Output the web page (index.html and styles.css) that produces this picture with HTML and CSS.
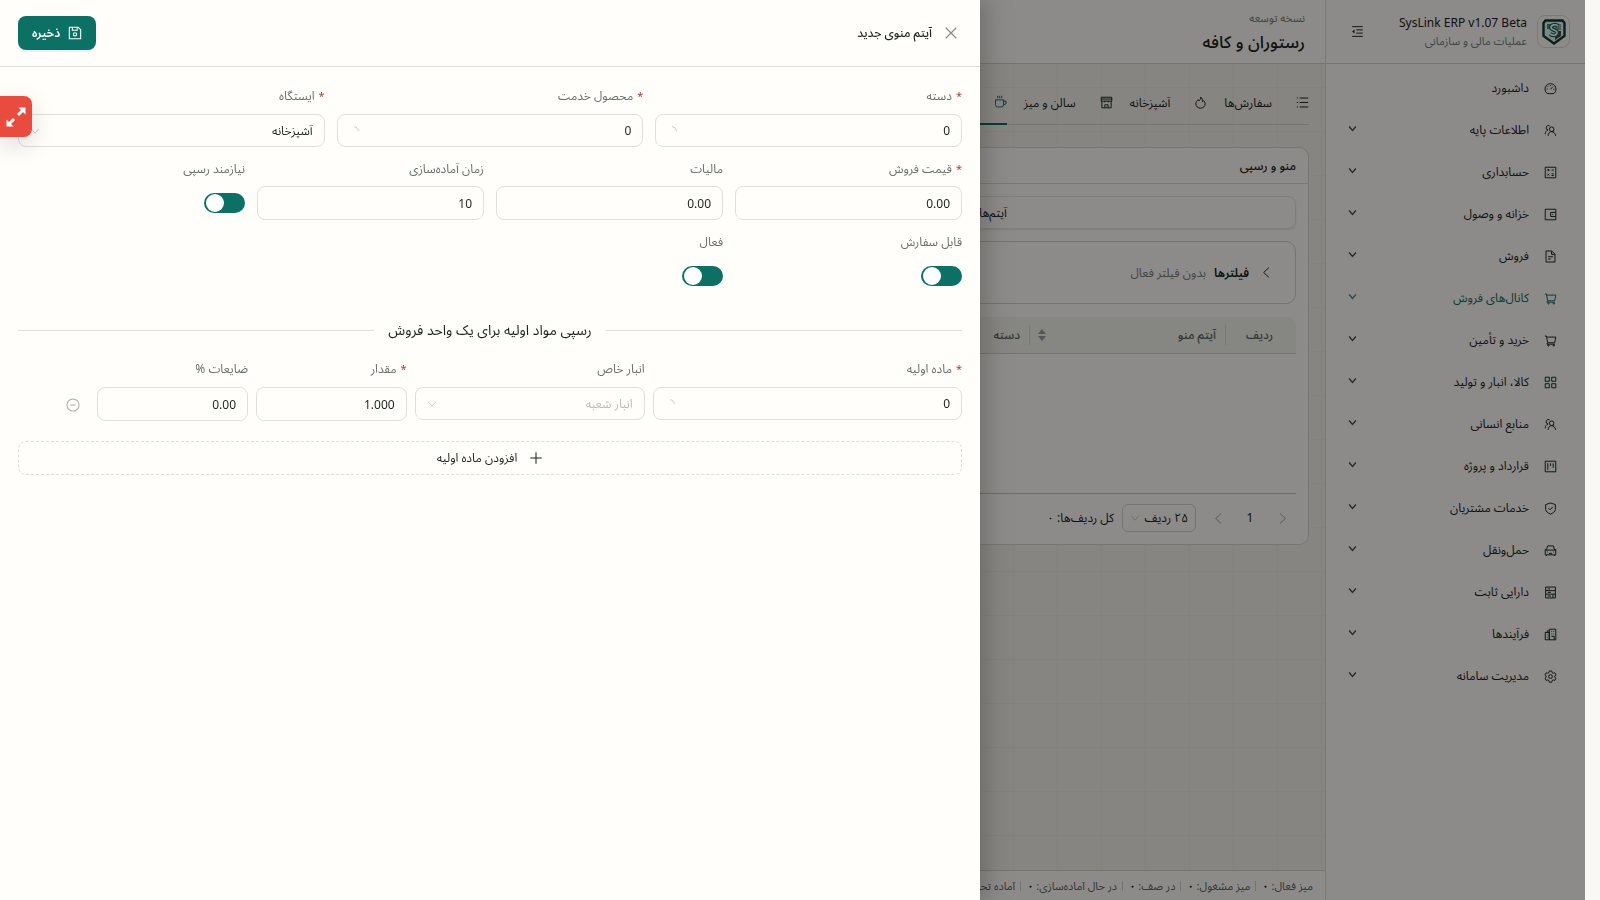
FILE: index.html
```html
<!DOCTYPE html>
<html lang="fa" dir="rtl">
  <head>
    <meta charset="UTF-8" />
    <meta name="viewport" content="width=device-width, initial-scale=1.0" />
    <title>SysLink ERP - رستوران و کافه</title>
    <link rel="stylesheet" href="styles.css">
  </head>
  <body>
    <!-- Icon sprite -->
    <svg class="sprite" aria-hidden="true">
      <symbol id="i-dashboard" viewBox="0 0 16 16"><path d="M4 14.3h8a6.8 6.8 0 0 0 2.8-5.5 6.8 6.8 0 0 0-13.6 0A6.8 6.8 0 0 0 4 14.3zM8 9l2.6-3M8 3.8v1.4M3.4 8.6h1.3M11.4 8.8h1.3M4.6 5.4l.9.9M11.2 4.8l.4.5" /></symbol>
      <symbol id="i-team" viewBox="0 0 16 16"><path d="M9.4 9.2a2.8 2.8 0 1 0 0-5.6 2.8 2.8 0 0 0 0 5.6zM5 14.6c.2-3 2-5.2 4.4-5.2s4.6 2.2 5 5.2M7 2.3a2.8 2.8 0 1 0-2 5.1C3 8 1.5 10 1.4 12.6M11 10.5l1.5-1.3" /></symbol>
      <symbol id="i-account" viewBox="0 0 16 16"><path d="M1.5 1.5h13v13h-13zM4 5h2.8M5.4 3.6v2.8M9.3 5H12M4.2 9.5l2.2 2.2M6.4 9.5l-2.2 2.2M9.3 9.6H12M9.3 11.7H12" /></symbol>
      <symbol id="i-wallet" viewBox="0 0 16 16"><path d="M14.5 5.5v-4h-13v13h13v-4M14.5 5.5H8.2v5h6.3zM10.3 8h1" /></symbol>
      <symbol id="i-file" viewBox="0 0 16 16"><path d="M9.5 1.2H2.5v13.6h11V5.2zM9.3 1.4v4h4M5 8.3h6M5 11h3.5" /></symbol>
      <symbol id="i-cart" viewBox="0 0 16 16"><path d="M1 2.5h2l1.5 8.3h8.6L14.6 3.8H3.4M4.3 10.8l-.6 1.7h9.6" /><circle cx="5.5" cy="14" r=".9" /><circle cx="12" cy="14" r=".9" /></symbol>
      <symbol id="i-grid" viewBox="0 0 16 16"><path d="M1.5 1.5h5v5h-5zM9.5 1.5h5v5h-5zM1.5 9.5h5v5h-5zM9.5 9.5h5v5h-5z" /></symbol>
      <symbol id="i-project" viewBox="0 0 16 16"><path d="M1.5 1.5h13v13h-13zM4.7 4v8M8 4v3.5M11.3 4v5.5" /></symbol>
      <symbol id="i-shield" viewBox="0 0 16 16"><path d="M8 1.2l6 2v6c0 2.6-3.4 4.6-6 5.7-2.6-1.1-6-3.1-6-5.7v-6zM5.4 7.6l2 2 3.4-3.6" /></symbol>
      <symbol id="i-car" viewBox="0 0 16 16"><path d="M1.5 7.5h13v5.800h-13zM3 7.300l1.500-5h7l1.500 5M1 6.500l1.500 1M15 6.500l-1.500 1M3 13.500v1.300M13 13.500v1.300M6 11.500h4M3.600 9.800h1M11.400 9.800h1" /></symbol>
      <symbol id="i-asset" viewBox="0 0 16 16"><path d="M2 1.300h12v13.400H2zM2 5.700h12M2 10h12M4.500 3.500h3M4.500 7.800h4M4.500 12.300h4M11 10v4.500" /></symbol>
      <symbol id="i-process" viewBox="0 0 16 16"><path d="M6.500 1.500h8v13h-8zM1.500 5.500h5v9h-5zM4 5.500v-2h2.500M9 4.200h1M11.500 4.200h1M9 7.200h1M11.500 7.200h1M9 10.200h3.500v4M3.500 8.500h1M3.500 11.500h1" /></symbol>
      <symbol id="i-gear" viewBox="0 0 16 16"><path d="M6.500 1.200h3l.5 2 1.300.8 2-.6 1.500 2.600-1.500 1.400v1.400l1.500 1.400-1.500 2.600-2-.6-1.300.8-.5 2h-3l-.5-2-1.300-.8-2 .6-1.500-2.600 1.500-1.400V7.400L1.200 6l1.500-2.600 2 .6L6 3.200z" /><circle cx="8" cy="8.100" r="2.300" /></symbol>
      <symbol id="i-outdent" viewBox="0 0 16 16"><path d="M1.500 2h13M6.500 6h8M6.500 10h8M1.500 14h13" /><path class="solid" d="M1.300 8l3-2.600v5.200z" /></symbol>
      <symbol id="i-list" viewBox="0 0 16 16"><path d="M4.500 2.500H15M4.500 8H15M4.500 13.500H15M1 2.500h1.400M1 8h1.400M1 13.500h1.400" /></symbol>
      <symbol id="i-fire" viewBox="0 0 16 16"><path d="M8.200 1.200c.3 2.500-1 3.600-2.200 5C5.600 5.700 5.300 5 5.300 4.500 3.600 5.800 2.300 7.700 2.300 9.600a5.700 5.400 0 0 0 11.400 0c0-1.500-.7-2.900-1.900-4-.3.700-.7 1.100-1.300 1.400.1-2.400-.7-4.600-2.300-5.800z" /></symbol>
      <symbol id="i-shop" viewBox="0 0 16 16"><path d="M1.500 1.500h13v4.800h-13zM2.300 6.300v8.200h11.400V6.300M1.500 3.700h13M6 14.500v-3.700h4v3.700M5.800 6.300v1.500M10.200 6.300v1.500" /></symbol>
      <symbol id="i-coffee" viewBox="0 0 16 16"><path d="M1.800 6h10v5.800a3 3 0 0 1-3 3h-4a3 3 0 0 1-3-3zM11.800 7.500h3v3.200l-3 1.500M4.500 1v3M7 1v3M9.500 1v3" /></symbol>
      <symbol id="i-right" viewBox="0 0 16 16"><path d="M5 2l6.500 6L5 14" /></symbol>
      <symbol id="i-left" viewBox="0 0 16 16"><path d="M11 2L4.500 8l6.500 6" /></symbol>
      <symbol id="i-down" viewBox="0 0 16 16"><path d="M2 4.500l6 7 6-7" /></symbol>
      <symbol id="i-close" viewBox="0 0 16 16"><path d="M2 2l12 12M14 2L2 14" /></symbol>
      <symbol id="i-save" viewBox="0 0 16 16"><path d="M1.500 1.500h10.200l2.800 2.800v10.200h-13zM5 1.500v3.300h5.500V1.500" /><circle cx="8" cy="9.500" r="1.900" /></symbol>
      <symbol id="i-plus" viewBox="0 0 16 16"><path d="M8 1.500v13M1.500 8h13" /></symbol>
      <symbol id="i-minus" viewBox="0 0 16 16"><circle cx="8" cy="8" r="6.900" /><path d="M5 8h6" /></symbol>
      <symbol id="i-spin" viewBox="0 0 16 16"><path d="M8 1.200a6.800 6.800 0 0 1 6.800 6.800" /></symbol>
      <symbol id="i-expand" viewBox="0 0 20 20"><path d="M12 8l5-5M8 12l-5 5" stroke-width="3" /><path class="solid" d="M12.500 0.500h7v7zM0.500 12.500v7h7z" /></symbol>
    </svg>

    <div class="app">
      <aside class="sidebar">
        <div class="brand">
          <span class="brand-logo">
            <svg viewBox="0 0 24 26" aria-hidden="true">
              <path d="M3.500 1.500h17l2 2.500v13L12 24.500 1.500 17V4z" fill="#e9f3ee" stroke="#0b3b35" stroke-width="2.400" />
              <path d="M5 5h7v5H5z" fill="#3d9a83" />
              <path d="M13 5h6v6h-6z" fill="#8ba7a0" />
              <path d="M13 12h6v5l-6 4z" fill="#56423f" />
              <path d="M16 7c-2-2-7-1.500-7 1.500 0 3 6 2 6 5s-4 3.500-7 1.500" fill="none" stroke="#0f6e63" stroke-width="4" />
              <path d="M16 7c-2-2-7-1.500-7 1.500 0 3 6 2 6 5s-4 3.500-7 1.500" fill="none" stroke="#fff" stroke-width="1.600" />
            </svg>
          </span>
          <div class="brand-text">
            <strong dir="ltr">SysLink ERP v1.07 Beta</strong>
            <span>عملیات مالی و سازمانی</span>
          </div>
          <button class="icon-button" aria-label="جمع کردن منو"><svg class="icon"><use href="#i-outdent" /></svg></button>
        </div>
        <nav class="menu">
          <a href="#"><svg class="icon"><use href="#i-dashboard" /></svg><span>داشبورد</span></a>
          <a href="#"><svg class="icon"><use href="#i-team" /></svg><span>اطلاعات پایه</span><svg class="icon arrow"><use href="#i-down" /></svg></a>
          <a href="#"><svg class="icon"><use href="#i-account" /></svg><span>حسابداری</span><svg class="icon arrow"><use href="#i-down" /></svg></a>
          <a href="#"><svg class="icon"><use href="#i-wallet" /></svg><span>خزانه و وصول</span><svg class="icon arrow"><use href="#i-down" /></svg></a>
          <a href="#"><svg class="icon"><use href="#i-file" /></svg><span>فروش</span><svg class="icon arrow"><use href="#i-down" /></svg></a>
          <a href="#" class="active"><svg class="icon"><use href="#i-cart" /></svg><span>کانال‌های فروش</span><svg class="icon arrow"><use href="#i-down" /></svg></a>
          <a href="#"><svg class="icon"><use href="#i-cart" /></svg><span>خرید و تأمین</span><svg class="icon arrow"><use href="#i-down" /></svg></a>
          <a href="#"><svg class="icon"><use href="#i-grid" /></svg><span>کالا، انبار و تولید</span><svg class="icon arrow"><use href="#i-down" /></svg></a>
          <a href="#"><svg class="icon"><use href="#i-team" /></svg><span>منابع انسانی</span><svg class="icon arrow"><use href="#i-down" /></svg></a>
          <a href="#"><svg class="icon"><use href="#i-project" /></svg><span>قرارداد و پروژه</span><svg class="icon arrow"><use href="#i-down" /></svg></a>
          <a href="#"><svg class="icon"><use href="#i-shield" /></svg><span>خدمات مشتریان</span><svg class="icon arrow"><use href="#i-down" /></svg></a>
          <a href="#"><svg class="icon"><use href="#i-car" /></svg><span>حمل‌ونقل</span><svg class="icon arrow"><use href="#i-down" /></svg></a>
          <a href="#"><svg class="icon"><use href="#i-asset" /></svg><span>دارایی ثابت</span><svg class="icon arrow"><use href="#i-down" /></svg></a>
          <a href="#"><svg class="icon"><use href="#i-process" /></svg><span>فرآیندها</span><svg class="icon arrow"><use href="#i-down" /></svg></a>
          <a href="#"><svg class="icon"><use href="#i-gear" /></svg><span>مدیریت سامانه</span><svg class="icon arrow"><use href="#i-down" /></svg></a>
        </nav>
      </aside>

      <div class="main">
        <header class="topbar">
          <span class="topbar-note">نسخه توسعه</span>
          <h1>رستوران و کافه</h1>
        </header>

        <main class="content">
          <nav class="tabs">
            <a href="#"><svg class="icon"><use href="#i-list" /></svg><span>سفارش‌ها</span></a>
            <a href="#"><svg class="icon"><use href="#i-fire" /></svg><span>آشپزخانه</span></a>
            <a href="#"><svg class="icon"><use href="#i-shop" /></svg><span>سالن و میز</span></a>
            <a href="#" class="active"><svg class="icon"><use href="#i-coffee" /></svg><span>منو و رسپی</span></a>
          </nav>

          <section class="card">
            <h2>منو و رسپی</h2>
            <div class="card-body">
              <div class="segmented">
                <button>آیتم‌های منو</button>
                <button>دسته‌ها</button>
              </div>
              <button class="filters">
                <svg class="icon"><use href="#i-left" /></svg>
                <strong>فیلترها</strong>
                <span>بدون فیلتر فعال</span>
              </button>
              <table class="items">
                <thead>
                  <tr>
                    <th class="col-row">ردیف</th>
                    <th class="col-item"><div>آیتم منو<svg class="sorter" viewBox="0 0 8 12"><path d="M0 5l4-5 4 5zM0 7l4 5 4-5z" /></svg></div></th>
                    <th>دسته</th>
                  </tr>
                </thead>
                <tbody>
                  <tr><td colspan="3"></td></tr>
                </tbody>
              </table>
              <div class="pagination">
                <button class="icon-button" aria-label="قبلی"><svg class="icon"><use href="#i-right" /></svg></button>
                <button class="page">1</button>
                <button class="icon-button" aria-label="بعدی"><svg class="icon"><use href="#i-left" /></svg></button>
                <span class="select page-size">
                  <select aria-label="تعداد ردیف"><option>۲۵ ردیف</option></select>
                  <svg class="icon"><use href="#i-down" /></svg>
                </span>
                <span>کل ردیف‌ها: ۰</span>
              </div>
            </div>
          </section>
        </main>

        <footer class="statusbar">
          <span>میز فعال: <b>۰</b></span>
          <span>میز مشغول: <b>۰</b></span>
          <span>در صف: <b>۰</b></span>
          <span>در حال آماده‌سازی: <b>۰</b></span>
          <span>آماده تحویل: <b>۰</b></span>
        </footer>
      </div>
    </div>

    <div class="mask"></div>

    <form class="drawer" role="dialog" aria-labelledby="drawerTitle">
      <div class="drawer-header">
        <button type="button" class="icon-button close" aria-label="بستن"><svg class="icon"><use href="#i-close" /></svg></button>
        <h2 id="drawerTitle">آیتم منوی جدید</h2>
        <button type="submit" class="save"><svg class="icon"><use href="#i-save" /></svg>ذخیره</button>
      </div>

      <div class="drawer-body">
        <div class="row row-3">
          <div class="field">
            <label class="required" for="category">دسته</label>
            <span class="select"><select id="category"><option>0</option></select><svg class="icon"><use href="#i-spin" /></svg></span>
          </div>
          <div class="field">
            <label class="required" for="product">محصول خدمت</label>
            <span class="select"><select id="product"><option>0</option></select><svg class="icon"><use href="#i-spin" /></svg></span>
          </div>
          <div class="field">
            <label class="required" for="station">ایستگاه</label>
            <span class="select"><select id="station"><option>آشپزخانه</option></select><svg class="icon"><use href="#i-down" /></svg></span>
          </div>
        </div>

        <div class="row row-4">
          <div class="field">
            <label class="required" for="price">قیمت فروش</label>
            <input type="text" inputmode="decimal" id="price" value="0.00" />
          </div>
          <div class="field">
            <label for="tax">مالیات</label>
            <input type="text" inputmode="decimal" id="tax" value="0.00" />
          </div>
          <div class="field">
            <label for="prepTime">زمان آماده‌سازی</label>
            <input type="text" inputmode="numeric" id="prepTime" value="10" />
          </div>
          <div class="field">
            <label for="needsRecipe">نیازمند رسپی</label>
            <span class="switch-line"><input type="checkbox" role="switch" class="switch" id="needsRecipe" checked /></span>
          </div>
          <div class="field">
            <label for="orderable">قابل سفارش</label>
            <span class="switch-line"><input type="checkbox" role="switch" class="switch" id="orderable" checked /></span>
          </div>
          <div class="field">
            <label for="enabled">فعال</label>
            <span class="switch-line"><input type="checkbox" role="switch" class="switch" id="enabled" checked /></span>
          </div>
        </div>

        <h3 class="divider">رسپی مواد اولیه برای یک واحد فروش</h3>

        <div class="row recipe">
          <div class="field span-8">
            <label class="required" for="material">ماده اولیه</label>
            <span class="select"><select id="material"><option>0</option></select><svg class="icon"><use href="#i-spin" /></svg></span>
          </div>
          <div class="field span-6">
            <label for="warehouse">انبار خاص</label>
            <span class="select empty"><select id="warehouse"><option>انبار شعبه</option></select><svg class="icon"><use href="#i-down" /></svg></span>
          </div>
          <div class="field span-4">
            <label class="required" for="amount">مقدار</label>
            <input type="text" inputmode="decimal" id="amount" value="1.000" />
          </div>
          <div class="field span-4">
            <label for="waste">ضایعات %</label>
            <input type="text" inputmode="decimal" id="waste" value="0.00" />
          </div>
          <button type="button" class="icon-button remove" aria-label="حذف"><svg class="icon"><use href="#i-minus" /></svg></button>
        </div>

        <button type="button" class="add"><svg class="icon"><use href="#i-plus" /></svg>افزودن ماده اولیه</button>
      </div>
    </form>

    <button class="expand" aria-label="تمام صفحه"><svg class="icon"><use href="#i-expand" /></svg></button>
  </body>
</html>
```
FILE: styles.css
```css
* {
  box-sizing: border-box;
}
body {
  margin: 0;
  padding-right: 15px;
  height: 100vh;
  overflow: hidden;
  background: #f9f8f4;
  color: #1b2422;
  font-family: "Noto Sans", "Noto Sans Arabic", "Vazirmatn", "DejaVu Sans", sans-serif;
  font-size: 12px;
  line-height: 22px;
}
h1,
h2,
h3 {
  margin: 0;
  font-weight: 500;
}
a {
  color: inherit;
  text-decoration: none;
}
button,
input,
select {
  font: inherit;
  color: inherit;
}
button {
  padding: 0;
  border: none;
  background: none;
  cursor: pointer;
}
.sprite {
  display: none;
}
.icon {
  width: 13px;
  height: 13px;
  flex: none;
  fill: none;
  stroke: currentColor;
  stroke-width: 1.2;
}
.solid {
  fill: currentColor;
  stroke: none;
}
.icon-button {
  display: flex;
  align-items: center;
  justify-content: center;
  width: 32px;
  height: 32px;
}

/* App shell */
.app {
  display: flex;
  height: 100%;
}
.sidebar {
  width: 260px;
  flex: none;
  background: #fffdf9;
  border-left: 1px solid #dcdad2;
}
.brand {
  display: flex;
  align-items: center;
  gap: 10px;
  height: 64px;
  padding: 0 15px;
  border-bottom: 1px solid #d5d3cc;
}
.brand-logo {
  display: flex;
  align-items: center;
  justify-content: center;
  width: 33px;
  height: 33px;
  border: 1px solid #e2dfd8;
  border-radius: 8px;
}
.brand-logo svg {
  width: 24px;
  height: 26px;
}
.brand-text {
  flex: 1;
  display: flex;
  flex-direction: column;
  line-height: 18px;
}
.brand-text strong {
  font-size: 12px;
  font-weight: 400;
  text-align: right;
}
.brand-text span {
  font-size: 11px;
  color: #77807d;
}
.menu {
  display: flex;
  flex-direction: column;
  gap: 4px;
  padding: 5px 10px;
}
.menu a {
  display: flex;
  align-items: center;
  gap: 15px;
  height: 38px;
  padding: 0 18px 0 12px;
}
.menu span {
  flex: 1;
}
.menu .arrow {
  width: 9px;
  height: 9px;
  margin-bottom: 4px;
  stroke-width: 2.4;
  opacity: 0.8;
}
.menu .active {
  color: #0d7065;
}

.main {
  flex: 1;
  min-width: 0;
  display: flex;
  flex-direction: column;
  background-color: #f5f3ed;
  background-image:
    linear-gradient(rgba(40, 60, 55, 0.03) 1px, transparent 1px),
    linear-gradient(90deg, rgba(40, 60, 55, 0.03) 1px, transparent 1px);
  background-size: 44px 44px;
  background-position: 1px 43px;
}
.topbar {
  height: 64px;
  padding: 7px 20px;
  background: #fffdf9;
  border-bottom: 1px solid #d5d3cc;
}
.topbar-note {
  display: block;
  font-size: 11px;
  color: #77807d;
}
.topbar h1 {
  font-size: 17px;
  line-height: 26px;
}
.content {
  flex: 1;
  padding: 16px;
}
.tabs {
  display: flex;
  gap: 17px;
  height: 45px;
  border-bottom: 1px solid #d5d3cc;
}
.tabs a {
  display: flex;
  align-items: center;
  gap: 24px;
  height: 45px;
}
.tabs .active {
  border-bottom: 2px solid #0d7065;
}
.tabs .active,
.tabs .active svg {
  color: #0d7065;
}
.card {
  margin-top: 22px;
  background: #fffdf9;
  border: 1px solid #d9d7cf;
  border-radius: 10px;
}
.card h2 {
  padding: 7px 12px 6px;
  font-size: 12px;
  border-bottom: 1px solid #dcdad2;
}
.card-body {
  padding: 12px;
}
.segmented {
  display: flex;
  height: 33px;
  border: 1px solid #e9e6df;
  border-radius: 8px;
  box-shadow: 0 1px 2px rgba(0, 0, 0, 0.1);
}
.segmented button {
  flex: 1;
}
.filters {
  display: flex;
  align-items: center;
  gap: 8px;
  width: 100%;
  height: 63px;
  margin: 12px 0 13px;
  padding: 0 22px;
  border: 1px solid #d5d3cc;
  border-radius: 10px;
}
.filters strong {
  margin-right: 3px;
  font-weight: 600;
}
.filters span {
  color: #77807d;
}
.items {
  width: 100%;
  table-layout: fixed;
  border-spacing: 0;
}
.items th {
  height: 37px;
  padding: 0 9px;
  background: #f5f4ee;
  border-bottom: 1px solid #d5d3cc;
  color: #5b6562;
  font-weight: 500;
  text-align: right;
}
.items .col-row {
  width: 70px;
  padding-right: 23px;
  border-top-right-radius: 8px;
}
.items .col-item {
  width: 197px;
}
.col-item div {
  display: flex;
  align-items: center;
  justify-content: space-between;
  height: 20px;
  margin: 0 -9px;
  padding: 0 9px 0 16px;
  border: 1px solid #dcdad2;
  border-width: 0 1px;
}
.col-item .sorter {
  margin-left: -8px;
}
.sorter {
  width: 8px;
  height: 12px;
  fill: #98a09d;
}
.items td {
  height: 140px;
  border-bottom: 1px solid #c9c7c0;
}
.pagination {
  display: flex;
  align-items: center;
  gap: 8px;
  padding: 10px 2px 0;
  line-height: 20px;
}
.pagination .icon-button,
.page {
  width: 24px;
  height: 28px;
}
.pagination .icon {
  color: #98a09d;
}
.statusbar {
  display: flex;
  height: 30px;
  align-items: center;
  padding: 0 12px;
  background: #fffdf9;
  border-top: 1px solid #d5d3cc;
  color: #5b6562;
  font-size: 11px;
}
.statusbar span + span {
  margin-right: 6px;
  padding-right: 6px;
  background: linear-gradient(#d5d3cc, #d5d3cc) right center / 1px 10px no-repeat;
}
.statusbar b {
  color: #1b2422;
}

/* Drawer */
.mask {
  position: fixed;
  inset: 0 15px 0 0;
  background: rgba(0, 0, 0, 0.45);
}
.drawer {
  position: fixed;
  inset: 0 auto 0 0;
  width: 980px;
  max-width: 100%;
  background: #fffefb;
  box-shadow: 6px 0 16px rgba(0, 0, 0, 0.12), 9px 0 28px 8px rgba(0, 0, 0, 0.08);
}
.drawer-header {
  display: flex;
  align-items: center;
  height: 67px;
  padding: 0 18px;
  border-bottom: 1px solid #dcdfda;
}
.drawer-header h2 {
  flex: 1;
  font-size: 12px;
}
.close {
  width: 22px;
  margin-left: 8px;
  color: #8a8f8d;
}
.drawer-header .icon,
.remove .icon,
.add .icon {
  width: 14px;
  height: 14px;
}
.close .icon {
  stroke-width: 1.5;
}
.save {
  display: flex;
  align-items: center;
  gap: 8px;
  height: 34px;
  padding: 0 14px;
  border-radius: 8px;
  background: #0d7065;
  color: #fff;
  font-weight: 600;
  box-shadow: 0 2px 0 rgba(13, 112, 101, 0.08);
}
.drawer-body {
  padding: 18px;
}
.row {
  display: grid;
  margin-bottom: 11px;
}
.row-3 {
  grid-template-columns: repeat(3, 1fr);
  gap: 12px;
}
.row-4 {
  grid-template-columns: repeat(4, 1fr);
  gap: 11px 12px;
}
.field {
  display: flex;
  flex-direction: column;
  gap: 7px;
  min-width: 0;
}
.row-4 .field {
  gap: 6px;
}
.field label {
  color: #66706d;
}
.required::before {
  content: "*";
  margin-left: 4px;
  color: #b23b3b;
  font-size: 11px;
}
.field input[type="text"],
.select select {
  width: 100%;
  height: 34px;
  padding: 0 11px;
  border: 1px solid #dfe0da;
  border-radius: 8px;
  background: none;
  text-align: right;
}
.select {
  position: relative;
  display: block;
}
.select select {
  display: block;
  height: 33px;
  appearance: none;
}
.select .icon {
  position: absolute;
  left: 12px;
  top: 50%;
  width: 10px;
  height: 10px;
  margin-top: -5px;
  color: #b4b8b5;
}
.empty select {
  color: #b9bdba;
}
.page-size {
  width: 74px;
  margin-right: 2px;
}
.page-size select {
  height: 28px;
  padding: 0 7px;
  border-color: #d5d3cc;
  border-radius: 6px;
}
.page-size .icon {
  left: 8px;
}
.switch-line {
  display: flex;
  align-items: center;
  height: 34px;
}
.switch {
  appearance: none;
  width: 41px;
  height: 20px;
  margin: 0;
  padding: 1px 2px;
  border-radius: 10px;
  background: #b9bdba;
}
.switch::before {
  content: "";
  display: block;
  width: 18px;
  height: 18px;
  border-radius: 50%;
  background: #fff;
}
.switch:checked {
  background: #0d7065;
}
.switch:checked::before {
  margin-right: auto;
}
.divider {
  display: flex;
  align-items: center;
  gap: 14px;
  margin: 26px 0 17px;
  font-size: 14px;
  font-weight: 400;
}
.divider::before,
.divider::after {
  content: "";
  flex: 1;
  border-top: 1px solid #dfe0da;
}
.recipe {
  grid-template-columns: repeat(24, 1fr);
  gap: 8px;
  margin-bottom: 20px;
}
.span-8 {
  grid-column: span 8;
}
.span-6 {
  grid-column: span 6;
}
.span-4 {
  grid-column: span 4;
}
.remove {
  grid-column: span 2;
  align-self: end;
  color: #a9aeab;
}
.add {
  display: flex;
  align-items: center;
  justify-content: center;
  gap: 12px;
  width: 100%;
  height: 34px;
  border: 1px dashed #dcdfda;
  border-radius: 8px;
}

.expand {
  position: fixed;
  left: 0;
  top: 96px;
  display: flex;
  align-items: center;
  justify-content: center;
  width: 32px;
  height: 41px;
  border-radius: 0 8px 8px 0;
  background: #e94b3f;
  color: #fff;
  box-shadow: 0 8px 24px rgba(0, 0, 0, 0.14);
}
.expand .icon {
  width: 20px;
  height: 20px;
}
```
